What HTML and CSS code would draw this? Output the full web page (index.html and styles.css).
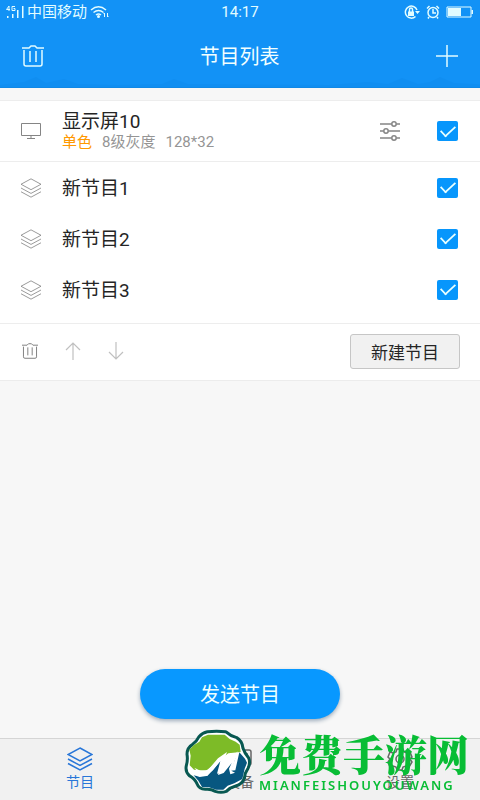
FILE: index.html
```html
<!DOCTYPE html>
<html lang="zh-CN">
<head>
<meta charset="utf-8">
<meta name="viewport" content="width=device-width, initial-scale=1">
<title>节目列表</title>
<link rel="stylesheet" href="styles.css">
</head>
<body>
<svg class="defs" aria-hidden="true">
  <symbol id="layers" viewBox="0 0 26 24">
    <path d="M13 1 25 7.500 13 14 1 7.500ZM1 12l12 6.500L25 12M1 16.500l12 6.500L25 16.500"/>
  </symbol>
  <symbol id="trash" viewBox="0 0 22 24">
    <path d="M0 4h7l2-2h4l2 2h7M2 6v14q0 2 2 2h14q2 0 2-2V6M8 7v11M14 7v11"/>
  </symbol>
</svg>
<header class="header">
  <div class="status">
    <div class="status-left">
      <svg class="signal" viewBox="0 0 18 14" width="18" height="14">
        <path class="fill" d="M1 11h1.500v2H1zM6 9h1.500v4H6zM11 5h1.500v8H11zM16 1h1.500v12H16z"/>
        <path class="thin" d="M3 6V1L.5 4.500H4M9 1.500H6v4h3V3.500H7.500"/>
      </svg>
      <span>中国移动</span>
      <svg class="wifi" viewBox="0 0 20 14" width="20" height="14">
        <path d="M1 5q7.500-6.500 15 0M3.500 7.500q5-4 10 0M6 10q2.500-2 5 0"/>
        <circle class="fill" cx="8.500" cy="11.500" r="1.500"/>
        <path class="thin" d="M14.500 12V8l-1 1M17.500 8v4l1-1"/>
      </svg>
    </div>
    <time>14:17</time>
    <div class="status-right">
      <svg viewBox="0 0 16 14" width="16" height="14">
        <path d="M13 5a6 6 0 1 0-1.500 6.500"/><path class="fill" d="M11 6h5l-2.500 3zM4 6.500h6V11H4z"/><path d="M5.500 7V4.500a1.500 1.500 0 0 1 3 0V7"/>
      </svg>
      <svg viewBox="0 0 14 14" width="14" height="14">
        <circle cx="7" cy="7.500" r="5"/><path d="M7 4v4h3M1 3.500 3.500 1M13 3.500 10.500 1M3 12l-1 1.500M11 12l1 1.500"/>
      </svg>
      <svg viewBox="0 0 28 12" width="28" height="12">
        <path class="thin" d="M1 1h24v10H1z"/><path class="fill" d="M2 2h13v8H2zM25.500 4H27v4h-1.500z"/>
      </svg>
    </div>
  </div>
  <div class="titlebar">
    <button class="icon-button" aria-label="删除"><svg width="22" height="24"><use href="#trash"/></svg></button>
    <h1>节目列表</h1>
    <button class="icon-button" aria-label="添加"><svg viewBox="0 0 24 24" width="24" height="24"><path d="M1 12h22M12 1v22"/></svg></button>
  </div>
  <svg class="skyline" viewBox="0 0 480 12" preserveAspectRatio="none" aria-hidden="true">
    <path d="M0 10 24 7l12-5 10 6 18-4 14 5 40 1 44-1 12-5 14 5 140 1 40-3 20 2 14-6 16 6 12-2 10-5 14 6 20 1 16 1v2H0z"/>
  </svg>
</header>
<main>
  <section class="card">
    <div class="row screen">
      <svg class="row-icon" viewBox="0 0 22 20" width="22" height="20"><path d="M1.500 2.500h19v12h-19zM11 15v2M7 17.500h8"/></svg>
      <div class="info">
        <label class="name" for="screen">显示屏10</label>
        <p class="meta"><span class="accent">单色</span><span>8级灰度</span><span>128*32</span></p>
      </div>
      <button class="tune" aria-label="参数"><svg viewBox="0 0 20 20" width="20" height="20"><path d="M0 3h11.500M16.500 3H20M0 10h3.500M8.500 10H20M0 17h11.500M16.500 17H20"/><circle cx="14" cy="3" r="2.200"/><circle cx="6" cy="10" r="2.200"/><circle cx="14" cy="17" r="2.200"/></svg></button>
      <input type="checkbox" id="screen" checked>
    </div>
    <ul class="programs">
      <li class="row"><svg class="row-icon" width="22" height="20"><use href="#layers"/></svg><label class="name" for="p1">新节目1</label><input type="checkbox" id="p1" checked></li>
      <li class="row"><svg class="row-icon" width="22" height="20"><use href="#layers"/></svg><label class="name" for="p2">新节目2</label><input type="checkbox" id="p2" checked></li>
      <li class="row"><svg class="row-icon" width="22" height="20"><use href="#layers"/></svg><label class="name" for="p3">新节目3</label><input type="checkbox" id="p3" checked></li>
    </ul>
    <div class="tools">
      <button class="tool" aria-label="删除节目"><svg width="16" height="18"><use href="#trash"/></svg></button>
      <button class="tool faded" aria-label="上移"><svg viewBox="0 0 16 18" width="16" height="18"><path d="M8 18V1M1 8l7-7 7 7"/></svg></button>
      <button class="tool faded" aria-label="下移"><svg viewBox="0 0 16 18" width="16" height="18"><path d="M8 0v17M1 10l7 7 7-7"/></svg></button>
      <button class="new">新建节目</button>
    </div>
  </section>
  <button class="send">发送节目</button>
</main>
<nav class="tabs">
  <a class="tab active" href="#programs"><svg width="26" height="24"><use href="#layers"/></svg>节目</a>
  <a class="tab" href="#device"><svg viewBox="0 0 26 24" width="26" height="24"><rect x="1" y="3" width="23" height="15" rx="2"/><path d="M17 7h3v7h-3zM8 21h10"/></svg>设备</a>
  <a class="tab" href="#settings"><svg viewBox="0 0 26 24" width="26" height="24"><circle cx="13" cy="12" r="4"/><path d="m10 2 6 0 1 3 3 1 3-1 2 5-2 2 2 3-3 5-3-1-3 1-1 3h-5l-1-3-3-1-3 1-2-5 2-3-2-2 2-5 3 1 3-1z"/></svg>设置</a>
</nav>
<aside class="brand">
  <svg viewBox="72 24 204 195" width="68" height="65" aria-hidden="true">
    <path fill="#fff" stroke="#085851" stroke-width="9" stroke-linejoin="round" d="M142 32 Q170 29 197 32 Q211 45 230 50 Q247 60 249 82 Q254 97 266 111 Q272 125 264 142 Q254 156 253 172 Q247 190 227 195 Q211 199 199 211 Q183 217 166 211 Q152 203 136 205 Q117 204 111 188 Q105 174 88 164 Q75 151 79 134 Q84 116 81 100 Q81 80 98 70 Q109 63 117 47 Q127 35 142 32Z"/>
    <path fill="#7dbb27" d="M144 41h50l15 13 18 8 12 9 3 22-37 4-67 52-36-3-13-13 3-29-4-18 13-13 17-11 8-13z"/>
    <path fill="#075780" d="M238 94 255 113 261 125 254 143 247 174 223 187 203 194 190 206 169 206 147 199 126 198 115 179 101 163 142 165 181 121 171 158 190 153 226 112 212 149 226 148Z"/>
    <path fill="#fff" d="M103 140 121 149 144 147 174 112 201 93 190 126 197 137 233 91 220 133 214 149 225 155 211 160 207 143 215 126 191 156 174 162 181 131 186 113 159 148 139 165 119 168 101 162 118 158Z"/>
  </svg>
  <div class="brand-text"><strong>免费手游网</strong><span>MIANFEISHOUYOUWANG</span></div>
</aside>
</body>
</html>
```
FILE: styles.css
```css
* { box-sizing: border-box; }
body {
  margin: 0;
  min-height: 100vh;
  display: flex;
  flex-direction: column;
  background: #f7f7f7;
  color: #252525;
  font-family: Roboto, "Noto Sans CJK SC", sans-serif;
}
button { border: 0; padding: 0; background: none; color: inherit; font-family: inherit; }
svg { display: block; fill: none; stroke: currentColor; stroke-width: 1.5; }
h1, p, ul { margin: 0; padding: 0; font-weight: 400; }
.defs { position: absolute; width: 0; height: 0; }
.fill { fill: currentColor; stroke: none; }
.thin { stroke-width: 1; }

.header { position: relative; height: 88px; background: #1292f6; color: #e2fcff; border-bottom: 1px solid #1088e6; }
.status { display: grid; grid-template-columns: 1fr auto 1fr; align-items: center; height: 24px; padding: 0 6px; font-size: 15px; line-height: 24px; }
.status-left, .status-right { display: flex; align-items: center; gap: 3px; }
.status-right { justify-content: flex-end; gap: 6px; }
.titlebar { display: flex; align-items: center; justify-content: space-between; height: 64px; padding: 0 21px 0 22px; }
.titlebar h1 { font-size: 20px; line-height: 24px; padding-top: 2px; color: #f2ffff; }
.skyline { position: absolute; left: 0; bottom: 0; width: 100%; height: 12px; fill: #0d86e8; stroke: none; opacity: .3; }

main { flex: 1; display: flex; flex-direction: column; align-items: center; justify-content: space-between; padding: 12px 0 19px; }
.card { width: 100%; background: #fff; border-top: 1px solid #ededed; border-bottom: 1px solid #ececec; }
.row { display: flex; align-items: center; height: 51px; padding: 0 22px 0 20px; }
.row-icon { flex: none; margin-right: 20px; color: #858585; stroke-width: 1; }
.screen { height: 61px; border-bottom: 1px solid #ededed; }
.info { flex: 1; }
.name { display: block; flex: 1; font-size: 19px; line-height: 22px; }
.programs .name { padding-top: 2px; }
.meta { display: flex; gap: 10px; font-size: 15px; line-height: 18px; color: #959595; }
.accent { color: #ff9800; }
.tune { margin-right: 37px; color: #858585; }
.programs { list-style: none; padding: 0 0 8px; }
input[type="checkbox"] { appearance: none; display: grid; place-items: center; flex: none; width: 21px; height: 20px; margin: 0; border-radius: 2px; background: #0796fc; }
input[type="checkbox"]:checked::before { content: ""; width: 14px; height: 7px; margin-bottom: 4px; border: solid #e9ffff; border-width: 0 0 2px 2px; transform: rotate(-43deg) scale(.9); }
.tools { display: flex; align-items: center; height: 57px; padding: 0 20px 2px 22px; border-top: 1px solid #ededed; color: #707070; }
.tool { width: 16px; margin-right: 27px; }
.faded { color: #c0c0c0; }
.tool svg { stroke-width: 1.2; }
.new { width: 110px; height: 35px; margin-left: auto; border: 1px solid #c6c6c6; border-radius: 3px; background: #f1f1f1; color: #252525; font-size: 17px; }
.send { width: 200px; height: 50px; padding-bottom: 2px; border-radius: 25px; background: #0898ff; box-shadow: 0 2px 4px #9cabba; color: #edffff; font-size: 20px; }

.tabs { display: flex; height: 62px; border-top: 1px solid #d5d5d5; background: #f1f1f1; color: #666; }
.tab { flex: 1; display: flex; flex-direction: column; align-items: center; padding-top: 8px; color: inherit; font-size: 14px; line-height: 22px; text-decoration: none; }
.active { color: #2876d8; }

.brand { position: fixed; right: 11px; bottom: 6px; display: flex; align-items: flex-end; gap: 7px; color: #08bd35; pointer-events: none; }
.brand svg { stroke: none; }
.brand-text { display: flex; flex-direction: column; width: 210px; }
.brand strong { font-family: "Noto Serif CJK SC", "Noto Sans CJK SC", serif; font-size: 42px; line-height: 48px; font-weight: 900; white-space: nowrap; }
.brand span { font-family: "Noto Sans", sans-serif; font-size: 13px; line-height: 17px; font-weight: 600; letter-spacing: 2px; }
```
